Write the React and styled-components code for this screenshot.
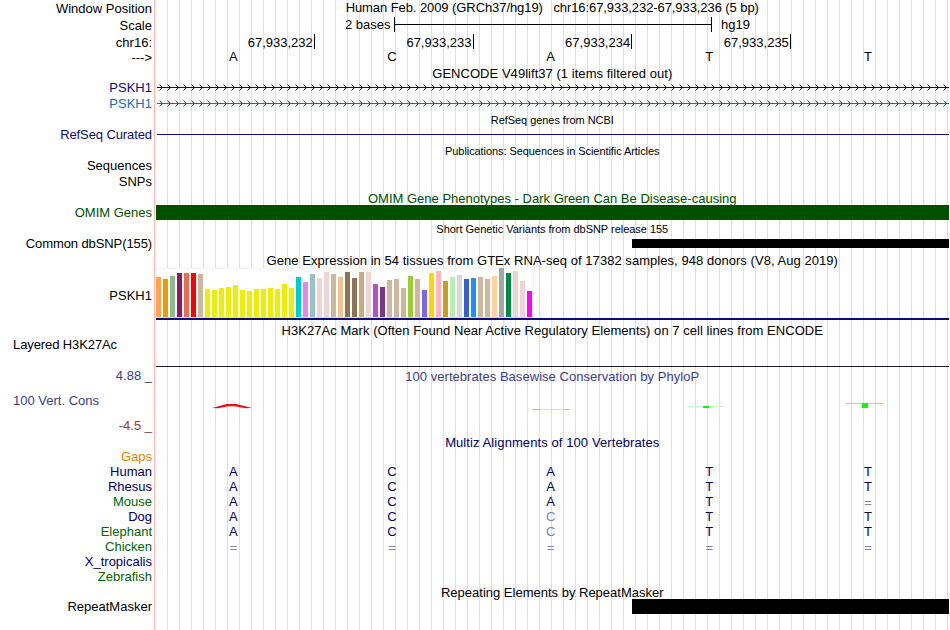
import React from "react";
import styled, { createGlobalStyle } from "styled-components";

const GlobalStyle = createGlobalStyle`
  body { margin: 0; background: #fff; }
`;

const Browser = styled.main`
  width: 949px;
  height: 630px;
  overflow: hidden;
  display: flex;
  flex-direction: column;
  font-family: "Liberation Sans", Arial, sans-serif;
  font-size: 13px;
  line-height: 15px;
  white-space: pre;
  color: #000;
  background-image:
    linear-gradient(#ffb4b4, #ffb4b4),
    repeating-linear-gradient(to right, #dcdcf8 0 1px, transparent 1px 12px);
  background-position: 154px 0, 167px 0;
  background-size: 1px 100%, 782px 100%;
  background-repeat: no-repeat;
`;

const Row = styled.div`
  flex: none;
  display: grid;
  grid-template-columns: 155px 794px;
  height: ${(p) => p.$h}px;
`;

const Side = styled.div`
  display: flex;
  flex-direction: column;
  justify-content: space-between;
  align-items: flex-end;
  padding: ${(p) => p.$top || 0}px 3px ${(p) => p.$bottom || 0}px 0;
`;

const Label = styled.span`
  display: block;
  height: 15px;
  color: ${(p) => p.$color || "#000"};
  letter-spacing: ${(p) => p.$track || 0}px;
`;

const WideLabel = styled(Label)`
  align-self: flex-start;
  padding-left: 13px;
`;

const Plot = styled.div`
  display: flex;
  flex-direction: column;
  min-width: 0;
`;

const Title = styled.div`
  display: flex;
  justify-content: center;
  padding-top: ${(p) => p.$top || 0}px;
  padding-left: 0.5px;
  font-size: ${(p) => (p.$small ? 11 : 13)}px;
  line-height: ${(p) => (p.$small ? 12 : 15)}px;
  letter-spacing: ${(p) => p.$track || 0}px;
  color: ${(p) => p.$color || "#000"};
`;

const Bases = styled.div`
  display: grid;
  grid-template-columns: repeat(5, 158.7px);
  width: 793.5px;
  margin-left: -1.1px;
  text-align: center;
`;

const Base = styled.span`
  color: ${(p) => p.$color || "#000"};
  padding-top: ${(p) => (p.$low ? 1 : 0)}px;
`;

const Ruler = styled.div`
  display: grid;
  grid-template-columns: repeat(4, 158.7px);
  padding: 0 0 0 1.3px;
`;

const Tick = styled.span`
  box-sizing: border-box;
  height: 15px;
  border-right: 1px solid #000;
  padding: 1px 1.2px 0 0;
  text-align: right;
`;

const ScaleLine = styled.div`
  display: flex;
  height: 16px;
  padding-left: 190px;
`;

const ScaleText = styled.span`
  width: ${(p) => p.$w}px;
`;

const ScaleBar = styled.span`
  display: flex;
  align-items: center;
  width: 316px;
  height: 15px;
  margin-right: 9px;
  border: solid #000;
  border-width: 0 1px;

  &::before {
    content: "";
    flex: 1;
    height: 1px;
    background: #000;
  }
`;

const Rule = styled.div`
  height: ${(p) => p.$h || 1}px;
  margin: ${(p) => p.$top || 0}px 0 0 ${(p) => p.$left ?? 1}px;
  background: ${(p) => p.$color};
`;

const Graphic = styled.svg`
  display: block;
  flex: none;
`;

const Panel = styled.div`
  box-sizing: border-box;
  display: flex;
  align-items: flex-end;
  gap: 2px;
  width: 378px;
  height: 50px;
  margin-left: 1px;
  background: #fff;
  border: solid #f3f3f3;
  border-width: 1px 1px 0 0;
  border-bottom: 1px solid #d9d9d9;
`;

const Bar = styled.span`
  width: 5px;
  flex: none;
`;

const tissues = [
  [40, "#ffa54f"], [38, "#ee9a00"], [41, "#8fbc8f"], [44, "#8b1c62"], [44, "#ee6a50"],
  [44, "#ff0000"], [43, "#cdb79e"],
  ...[28, 27, 29, 30, 32, 27, 26, 28, 28, 29, 28, 33, 29].map((h) => [h, "#eeee00"]),
  [40, "#00cdcd"], [35, "#ee82ee"], [43, "#9ac0cd"], [39, "#eed5d2"], [45, "#eed5d2"],
  [43, "#cdb79e"], [40, "#eec591"], [45, "#8b7355"], [39, "#8b7355"], [45, "#cdaa7d"],
  [45, "#eed5d2"], [33, "#b452cd"], [30, "#7a378b"], [37, "#cdb79e"], [38, "#cdb79e"],
  [29, "#cdb79e"], [41, "#9acd32"], [38, "#cdb79e"], [27, "#7a67ee"], [44, "#ffd700"],
  [46, "#ffb6c1"], [36, "#cd9b1d"], [40, "#b4eeb4"], [42, "#d9d9d9"], [38, "#3a5fcd"],
  [39, "#1e90ff"], [40, "#cdb79e"], [38, "#cdb79e"], [41, "#ffd39b"], [49, "#a6a6a6"],
  [44, "#008b45"], [46, "#eed5d2"], [36, "#eed5d2"], [26, "#ff00ff"],
];

const navy = "#000064";
const green = "#006400";
const pale = "#8080b2";
const violet = "#3c3c8c";

const alignments = [
  ["Human", navy, "ACATT"],
  ["Rhesus", navy, "ACATT"],
  ["Mouse", green, "ACAT="],
  ["Dog", navy, "ACcTT"],
  ["Elephant", green, "ACcTT"],
  ["Chicken", green, "====="],
  ["X_tropicalis", navy, ""],
  ["Zebrafish", green, ""],
];

function BaseLetters({ text, color }) {
  return (
    <Bases>
      {[...text].map((c, i) => (
        <Base key={i} $low={c === "="} $color={c === "=" || c === "c" ? pale : color}>
          {c.toUpperCase()}
        </Base>
      ))}
    </Bases>
  );
}

function GeneLine({ color }) {
  const heads = Array.from({ length: 99 }, (_, i) => {
    const x = 7.5 + i * 8;
    return `M${x - 3} 4.5L${x} 7.5L${x - 3} 10.5`;
  }).join("");
  return (
    <Graphic width="794" height="15">
      <path d="M2 7h792v1H2z" fill={color} />
      <path d={heads} fill="none" stroke={color} />
    </Graphic>
  );
}

function TitleRow({ h, children, ...rest }) {
  return (
    <Row $h={h}>
      <Side />
      <Plot><Title {...rest}>{children}</Title></Plot>
    </Row>
  );
}

export default function App() {
  return (
    <>
      <GlobalStyle />
      <Browser>
        <Row $h={17}>
          <Side $top={1}><Label>Window Position</Label></Side>
          <Plot>
            <Title $track={-0.08}>Human Feb. 2009 (GRCh37/hg19)   chr16:67,933,232-67,933,236 (5 bp)</Title>
          </Plot>
        </Row>
        <Row $h={17}>
          <Side $top={1}><Label>Scale</Label></Side>
          <Plot>
            <ScaleLine>
              <ScaleText $w={49}>2 bases</ScaleText>
              <ScaleBar />
              <ScaleText $w={40}>hg19</ScaleText>
            </ScaleLine>
          </Plot>
        </Row>
        <Row $h={15}>
          <Side $top={1}><Label>chr16:</Label></Side>
          <Plot>
            <Ruler>
              {["67,933,232", "67,933,233", "67,933,234", "67,933,235"].map((t) => (
                <Tick key={t}>{t}</Tick>
              ))}
            </Ruler>
          </Plot>
        </Row>
        <Row $h={17}>
          <Side $top={1}><Label>---&gt;</Label></Side>
          <Plot><BaseLetters text="ACATT" color="#000" /></Plot>
        </Row>
        <TitleRow h={14} $track={0.04}>GENCODE V49lift37 (1 items filtered out)</TitleRow>
        <Row $h={16}>
          <Side><Label $color="#0c0c78">PSKH1</Label></Side>
          <Plot><GeneLine color="#0c0c78" /></Plot>
        </Row>
        <Row $h={17}>
          <Side><Label $color="#1470b4">PSKH1</Label></Side>
          <Plot><GeneLine color="#1470b4" /></Plot>
        </Row>
        <TitleRow h={14} $top={1} $small $track={-0.05}>RefSeq genes from NCBI</TitleRow>
        <Row $h={16}>
          <Side><Label $color="#0c0c78" $track={-0.1}>RefSeq Curated</Label></Side>
          <Plot><Rule $top={7} $left={2} $color="#0c0c78" /></Plot>
        </Row>
        <TitleRow h={15} $top={2} $small $track={-0.07}>Publications: Sequences in Scientific Articles</TitleRow>
        <Row $h={16}><Side><Label>Sequences</Label></Side></Row>
        <Row $h={16}><Side><Label>SNPs</Label></Side></Row>
        <TitleRow h={15} $top={1} $color="#005000">OMIM Gene Phenotypes - Dark Green Can Be Disease-causing</TitleRow>
        <Row $h={15}>
          <Side><Label $color="#005000">OMIM Genes</Label></Side>
          <Plot><Rule $h={15} $color="#005000" /></Plot>
        </Row>
        <TitleRow h={16} $top={3} $small $track={-0.03}>Short Genetic Variants from dbSNP release 155</TitleRow>
        <Row $h={16}>
          <Side><Label $track={-0.1}>Common dbSNP(155)</Label></Side>
          <Plot><Rule $h={9} $top={3} $left={477} $color="#000" /></Plot>
        </Row>
        <TitleRow h={16} $top={1} $track={0.045}>
          Gene Expression in 54 tissues from GTEx RNA-seq of 17382 samples, 948 donors (V8, Aug 2019)
        </TitleRow>
        <Row $h={52}>
          <Side $top={20}><Label>PSKH1</Label></Side>
          <Plot>
            <Panel>
              {tissues.map(([h, color], i) => (
                <Bar key={i} style={{ height: h, background: color }} />
              ))}
            </Panel>
            <Rule $h={2} $color="#0c0c78" />
          </Plot>
        </Row>
        <TitleRow h={17} $top={3} $track={0.045}>
          H3K27Ac Mark (Often Found Near Active Regulatory Elements) on 7 cell lines from ENCODE
        </TitleRow>
        <Row $h={31}>
          <Side><WideLabel $track={-0.1}>Layered H3K27Ac</WideLabel></Side>
          <Plot><Rule $top={29} $color="#281432" /></Plot>
        </Row>
        <Row $h={67}>
          <Side $bottom={2}>
            <Label $color={violet}>4.88 _</Label>
            <WideLabel $color={violet}>100 Vert. Cons</WideLabel>
            <Label $color="#8c3c3c">-4.5 _</Label>
          </Side>
          <Plot>
            <Title $top={1} $track={0.045} $color={violet}>100 vertebrates Basewise Conservation by PhyloP</Title>
            <Graphic width="794" height="30">
              <path d="M57 23.9L72 20h9l16 3.9-6 .3-13-2.3h-4L63 24.2z" fill="#f00" />
              <path d="M71 22.9h11" stroke="#f99" strokeWidth=".7" />
              <path d="M377 25.5h38" stroke="#deddbd" />
              <path d="M378 25.5h7m25 0h4" stroke="#c3bd72" />
              <path d="M532 22.5h37" stroke="#c8f8d0" />
              <path d="M548 22h6v2h-6z" fill="#0f0" />
              <path d="M691 19.5h38" stroke="#80f880" />
              <path d="M707 19h6v5h-6z" fill="#0f0" />
            </Graphic>
          </Plot>
        </Row>
        <TitleRow h={14} $track={0.09} $color={navy}>Multiz Alignments of 100 Vertebrates</TitleRow>
        <Row $h={15}><Side><Label $color="#e68200">Gaps</Label></Side></Row>
        {alignments.map(([name, color, text]) => (
          <Row key={name} $h={15}>
            <Side><Label $color={color}>{name}</Label></Side>
            <Plot><BaseLetters text={text} color={navy} /></Plot>
          </Row>
        ))}
        <TitleRow h={15} $top={1}>Repeating Elements by RepeatMasker</TitleRow>
        <Row $h={15}>
          <Side><Label>RepeatMasker</Label></Side>
          <Plot><Rule $h={15} $left={477} $color="#000" /></Plot>
        </Row>
      </Browser>
    </>
  );
}
